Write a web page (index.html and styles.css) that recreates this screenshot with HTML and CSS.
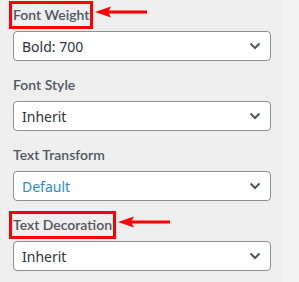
FILE: index.html
```html
<!DOCTYPE html>
<html lang="en">
<head>
    <meta charset="UTF-8">
    <meta name="viewport" content="width=device-width, initial-scale=1.0">
    <title>Typography controls</title>
    <link rel="stylesheet" href="styles.css">
</head>
<body>
    <div class="page">
        <div class="panel">
            <div class="field">
                <div class="label">
                    <span class="marked">Font Weight</span>
                    <svg class="arrow" width="52" height="12" viewBox="0 0 52 12"><polygon points="0,6 16,0.5 13,6 16,11.5" fill="#f00"/><rect x="12" y="4.5" width="40" height="3" fill="#f00"/></svg>
                </div>
                <div class="select">
                    <span>Bold: 700</span>
                    <svg class="chevron" width="12" height="8" viewBox="0 0 12 8"><path d="M1.5 1.5 L6 6 L10.5 1.5" fill="none" stroke="#50575e" stroke-width="2"/></svg>
                </div>
            </div>

            <div class="field">
                <div class="label"><span>Font Style</span></div>
                <div class="select">
                    <span>Inherit</span>
                    <svg class="chevron" width="12" height="8" viewBox="0 0 12 8"><path d="M1.5 1.5 L6 6 L10.5 1.5" fill="none" stroke="#50575e" stroke-width="2"/></svg>
                </div>
            </div>

            <div class="field">
                <div class="label"><span>Text Transform</span></div>
                <div class="select">
                    <span class="blue">Default</span>
                    <svg class="chevron" width="12" height="8" viewBox="0 0 12 8"><path d="M1.5 1.5 L6 6 L10.5 1.5" fill="none" stroke="#50575e" stroke-width="2"/></svg>
                </div>
            </div>

            <div class="field">
                <div class="label">
                    <span class="marked">Text Decoration</span>
                    <svg class="arrow" width="52" height="12" viewBox="0 0 52 12"><polygon points="0,6 16,0.5 13,6 16,11.5" fill="#f00"/><rect x="12" y="4.5" width="40" height="3" fill="#f00"/></svg>
                </div>
                <div class="select">
                    <span>Inherit</span>
                    <svg class="chevron" width="12" height="8" viewBox="0 0 12 8"><path d="M1.5 1.5 L6 6 L10.5 1.5" fill="none" stroke="#50575e" stroke-width="2"/></svg>
                </div>
            </div>
        </div>
        <div class="strip"></div>
    </div>
</body>
</html>
```

FILE: styles.css
```css
body {
    margin: 0;
    font-family: "Noto Sans", "Liberation Sans", sans-serif;
    background: #eeeeee;
}
.page {
    display: flex;
    min-height: 282px;
}
.panel {
    width: 258px;
    padding: 0 11px 0 13px;
}
.strip {
    flex: 1;
    background: #f3f3f3;
}
.field { margin-bottom: 9px; }
.label {
    display: flex;
    align-items: flex-start;
    padding-top: 5px;
    margin-bottom: 6px;
    line-height: 20px;
    font-family: Lato, "Noto Sans", sans-serif;
    font-size: 14px;
    font-weight: 600;
    color: #50575e;
}
.marked {
    outline: 3px solid #f00;
    outline-offset: 1px;
}
.arrow {
    margin: 1px 0 0 6px;
}
.select {
    display: flex;
    align-items: center;
    justify-content: space-between;
    box-sizing: border-box;
    height: 30px;
    padding: 0 9px 0 8px;
    background: #fff;
    border: 1px solid #8c8f94;
    border-radius: 4px;
    font-size: 14px;
    color: #2c3338;
}
.blue { color: #2a8bc7; }
```
